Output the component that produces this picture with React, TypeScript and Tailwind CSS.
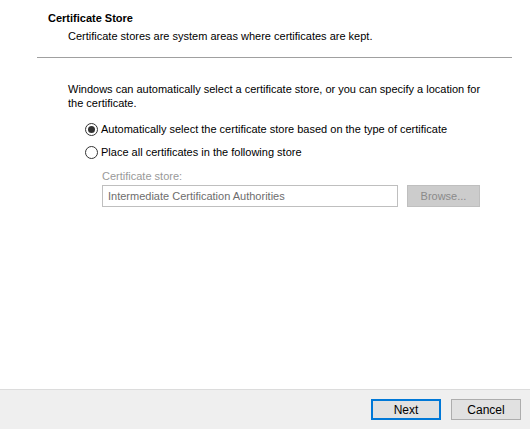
import React from 'react';

function Radio({ checked }: { checked: boolean }) {
  return (
    <span className="flex h-[13px] w-[13px] items-center justify-center rounded-full border border-[#333333] bg-white">
      {checked && <span className="h-[7px] w-[7px] rounded-full bg-[#333333]" />}
    </span>
  );
}

export default function App() {
  return (
    <div
      className="flex h-[429px] w-[530px] flex-col bg-white text-[11px] text-black"
      style={{ fontFamily: '"Liberation Sans", Arial, sans-serif' }}
    >
      {/* Header */}
      <div className="flex flex-col pl-[48px] pt-[11px]">
        <div className="font-bold leading-[14px]">Certificate Store</div>
        <div className="mt-[4px] pl-[20px] leading-[14px]">
          Certificate stores are system areas where certificates are kept.
        </div>
      </div>
      <div className="ml-[37px] mr-[18px] mt-[14px] h-px bg-[#a0a0a0]" />

      {/* Body */}
      <div className="flex flex-1 flex-col pl-[68px] pr-[40px] pt-[24px]">
        <p className="leading-[14px]">
          Windows can automatically select a certificate store, or you can specify a location for
          the certificate.
        </p>
        <div className="mt-[12px] flex flex-col gap-[9px] pl-[17px]">
          <label className="flex items-center gap-[3px] leading-[14px]">
            <Radio checked />
            <span>Automatically select the certificate store based on the type of certificate</span>
          </label>
          <label className="flex items-center gap-[3px] leading-[14px]">
            <Radio checked={false} />
            <span>Place all certificates in the following store</span>
          </label>
        </div>
        <div className="mt-[10px] pl-[34px] text-[#999999] leading-[14px]">Certificate store:</div>
        <div className="mt-[2px] flex items-center gap-[9px] pl-[34px]">
          <div className="flex h-[22px] w-[296px] items-center border border-[#bfbfbf] px-[5px] text-[#6d6d6d]">
            Intermediate Certification Authorities
          </div>
          <div className="flex h-[22px] w-[73px] items-center justify-center border border-[#bfbfbf] bg-[#cccccc] text-[#8a8a8a]">
            Browse...
          </div>
        </div>
      </div>

      {/* Footer */}
      <div className="flex h-[40px] items-center justify-end gap-[10px] border-t border-[#dcdcdc] bg-[#efefef] pr-[9px] text-[12px]">
        <button className="flex h-[21px] w-[70px] items-center justify-center border-2 border-[#0078d7] bg-[#e1e1e1]">
          Next
        </button>
        <button className="flex h-[21px] w-[70px] items-center justify-center border border-[#adadad] bg-[#e1e1e1]">
          Cancel
        </button>
      </div>
    </div>
  );
}
